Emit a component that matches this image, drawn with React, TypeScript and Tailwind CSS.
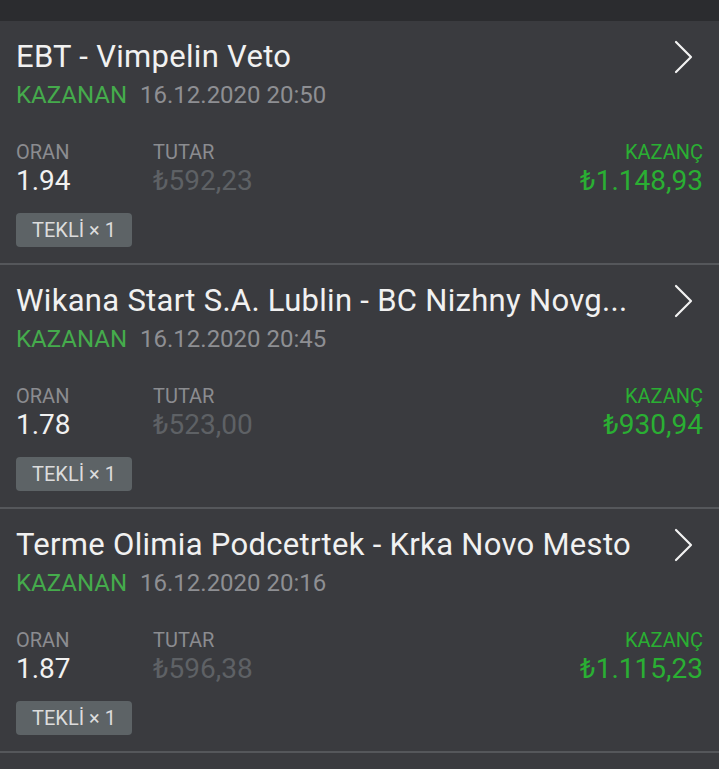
import React from 'react'

type Bet = {
  title: string
  date: string
  odds: string
  stake: string
  win: string
}

const bets: Bet[] = [
  { title: 'EBT - Vimpelin Veto', date: '16.12.2020 20:50', odds: '1.94', stake: '₺592,23', win: '₺1.148,93' },
  { title: 'Wikana Start S.A. Lublin - BC Nizhny Novg...', date: '16.12.2020 20:45', odds: '1.78', stake: '₺523,00', win: '₺930,94' },
  { title: 'Terme Olimia Podcetrtek - Krka Novo Mesto', date: '16.12.2020 20:16', odds: '1.87', stake: '₺596,38', win: '₺1.115,23' },
]

function Chevron() {
  return (
    <svg width="19" height="34" viewBox="0 0 19 34" fill="none" className="shrink-0">
      <polyline points="2,2 17,17 2,32" stroke="#f2f2f2" strokeWidth="2.2" strokeLinecap="round" strokeLinejoin="round" />
    </svg>
  )
}

function BetCard({ bet }: { bet: Bet }) {
  return (
    <div className="h-[244px] border-b-2 border-[#55575b] bg-[#3a3b3f] pl-4 pr-4 pt-[18px]">
      <div className="flex h-[36px] items-center pr-[10px]">
        <div className="min-w-0 flex-1 overflow-hidden whitespace-nowrap text-[31px] leading-[36px] tracking-[0.3px] text-[#f1f1f1]">
          {bet.title}
        </div>
        <Chevron />
      </div>
      <div className="mt-[6px] flex h-[28px] items-center gap-[13px] text-[24px] leading-[28px]">
        <span className="text-[#45ab4c]">KAZANAN</span>
        <span className="text-[#8e8f93]">{bet.date}</span>
      </div>
      <div className="mt-[31px] flex">
        <div className="w-[137px]">
          <div className="text-[20px] leading-[24px] text-[#8b8c90]">ORAN</div>
          <div className="text-[28px] leading-[34px] text-[#f1f1f1]">{bet.odds}</div>
        </div>
        <div className="flex-1">
          <div className="text-[20px] leading-[24px] text-[#8b8c90]">TUTAR</div>
          <div className="text-[28px] leading-[34px] text-[#5e6165]">{bet.stake}</div>
        </div>
        <div className="text-right">
          <div className="text-[20px] leading-[24px] text-[#2aaf33]">KAZANÇ</div>
          <div className="text-[28px] leading-[34px] text-[#2aaf33]">{bet.win}</div>
        </div>
      </div>
      <div className="mt-[15px] inline-flex h-[34px] w-[116px] items-center justify-center rounded-[4px] bg-[#5d6366] text-[20px] text-[#dcdcdc]">
        TEKLİ × 1
      </div>
    </div>
  )
}

export default function App() {
  return (
    <div className="h-[769px] w-[719px] overflow-hidden bg-[#3a3b3f] font-['Roboto',_'Liberation_Sans',_sans-serif]">
      <div className="h-[21px] bg-[#2b2c2f]" />
      {bets.map((b) => (
        <BetCard key={b.title} bet={b} />
      ))}
    </div>
  )
}
